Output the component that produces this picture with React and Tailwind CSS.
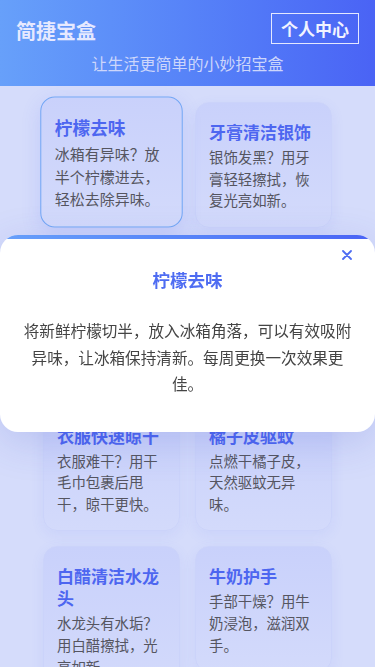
import { useState } from 'react'

const tips = [
  { title: '柠檬去味', text: '冰箱有异味？放半个柠檬进去，轻松去除异味。', detail: '将新鲜柠檬切半，放入冰箱角落，可以有效吸附异味，让冰箱保持清新。每周更换一次效果更佳。' },
  { title: '牙膏清洁银饰', text: '银饰发黑？用牙膏轻轻擦拭，恢复光亮如新。' },
  { title: '小苏打清洁水槽', text: '水槽有污渍？撒上小苏打擦洗，干净无异味。' },
  { title: '保鲜膜防溢锅', text: '煮汤易溢锅？锅上盖保鲜膜，轻松防溢出。' },
  { title: '衣服快速晾干', text: '衣服难干？用干毛巾包裹后甩干，晾干更快。' },
  { title: '橘子皮驱蚊', text: '点燃干橘子皮，天然驱蚊无异味。' },
  { title: '白醋清洁水龙头', text: '水龙头有水垢？用白醋擦拭，光亮如新。' },
  { title: '牛奶护手', text: '手部干燥？用牛奶浸泡，滋润双手。' },
  { title: '盐水洗水果', text: '水果表面有农残？用淡盐水浸泡十分钟。' },
  { title: '报纸擦玻璃', text: '玻璃有水痕？用旧报纸擦拭，透亮无痕。' },
]

function Card({ tip, active }) {
  return (
    <div
      className={
        active
          ? 'rounded-[14px] border border-[#72a6f5] bg-gradient-to-b from-[#c9d1fb] to-[#d3dafb] pt-[18px] px-[13px] pb-[16px] shadow-[0_6px_18px_rgba(80,100,240,0.15)] scale-[1.04] -translate-y-[3px]'
          : 'rounded-[14px] border border-[#cbd3fa] bg-gradient-to-b from-[#c9d1fb] to-[#d3dafb] pt-[18px] px-[13px] pb-[16px] shadow-[0_4px_14px_rgba(80,100,240,0.08)]'
      }
    >
      <h3 className="text-[17px] leading-[22px] font-bold text-[#4d66f0]">{tip.title}</h3>
      <p className="mt-[3px] text-[14.4px] leading-[21.6px] text-[#555560]">{tip.text}</p>
    </div>
  )
}

export default function App() {
  const [open, setOpen] = useState(0)
  const current = open !== null ? tips[open] : null

  return (
    <div className="min-h-screen bg-[#d5dcfb] font-['Noto_Sans_CJK_SC',sans-serif]">
      <header className="bg-gradient-to-r from-[#67a0fa] to-[#4a63f5] px-4 pt-[13px] pb-[11px]">
        <div className="flex justify-between items-start">
          <h1 className="text-[20px] leading-[36px] font-bold text-[#e6e9ff]">简捷宝盒</h1>
          <button className="h-[31px] px-[9px] border border-[#e4e8ff] text-[17px] font-bold text-[#f2f3ff] leading-none">
            个人中心
          </button>
        </div>
        <p className="mt-[2px] text-center text-[16px] leading-[24px] text-[#cdd6fb]">让生活更简单的小妙招宝盒</p>
      </header>

      <main className="pt-4 pb-8">
        <div className="mx-auto w-[289px] grid grid-cols-2 gap-[15px]">
          {tips.map((tip, i) => (
            <div key={i} onClick={() => setOpen(i)}>
              <Card tip={tip} active={i === 0} />
            </div>
          ))}
        </div>
      </main>

      {current && (
        <div className="fixed inset-x-0 top-[235px] bg-white rounded-[18px] overflow-hidden shadow-[0_10px_40px_rgba(60,80,200,0.18)]">
          <div className="h-1 bg-gradient-to-r from-[#67a0fa] to-[#4a63f5]"></div>
          <button onClick={() => setOpen(null)} className="absolute top-[15px] right-[23px] w-[10px] h-[10px] text-[#4e6cf2]">
            <svg viewBox="0 0 10 10" width="10" height="10" fill="none" stroke="currentColor" strokeWidth="1.8" strokeLinecap="round">
              <path d="M1 1L9 9M9 1L1 9" />
            </svg>
          </button>
          <h2 className="pt-[29px] text-center text-[17.5px] leading-[24px] font-bold text-[#4e6cf2]">{current.title}</h2>
          <p className="mt-[25px] px-5 pb-[35px] text-center text-[15.6px] leading-[26.7px] text-[#444]">
            {current.detail || current.text}
          </p>
        </div>
      )}
    </div>
  )
}
